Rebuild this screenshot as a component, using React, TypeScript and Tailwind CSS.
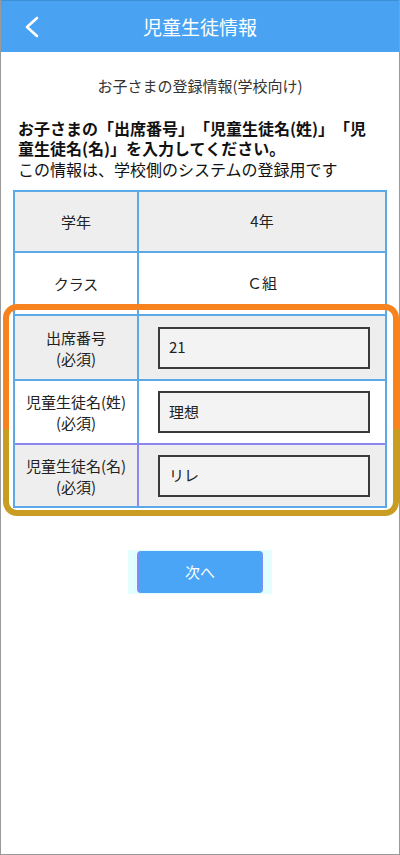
import React from 'react';

const font = { fontFamily: '"Noto Sans CJK JP", "Noto Sans", sans-serif' };

type Row = { label: string[]; value?: string; input?: string; shaded: boolean; tint?: boolean; h: string };

const rows: Row[] = [
  { label: ['学年'], value: '4年', shaded: true, h: 'h-[59px]' },
  { label: ['クラス'], value: 'Ｃ組', shaded: false, h: 'h-[63px]' },
  { label: ['出席番号', '(必須)'], input: '21', shaded: true, h: 'h-[65px]' },
  { label: ['児童生徒名(姓)', '(必須)'], input: '理想', shaded: false, h: 'h-[64px]' },
  { label: ['児童生徒名(名)', '(必須)'], input: 'リレ', shaded: true, tint: true, h: 'h-[63px]' },
];

function BackIcon() {
  return (
    <svg width="16" height="22" viewBox="0 0 16 22" fill="none">
      <polyline points="13,2 3,11 13,20" stroke="white" strokeWidth="2.6" strokeLinecap="round" strokeLinejoin="round" />
    </svg>
  );
}

function InfoRow({ row, first }: { row: Row; first: boolean }) {
  const bg = row.shaded ? 'bg-[#eeeeee]' : 'bg-white';
  const line = row.tint ? 'border-[#8c86f0]' : 'border-[#5ca9e8]';
  return (
    <div className={`flex ${row.h} ${first ? '' : 'border-t-2'} ${line} ${bg}`}>
      <div className={`w-[124px] shrink-0 border-r-2 ${line} flex flex-col items-center justify-center text-[15px] leading-[21px] text-[#222]`}>
        {row.label.map((l) => (
          <span key={l}>{l}</span>
        ))}
      </div>
      <div className="flex-1 flex items-center">
        {row.input !== undefined ? (
          <div className="ml-[19px] w-[212px] h-[42px] border-2 border-[#3a3a3a] bg-[#f3f3f3] flex items-center pl-[9px] text-[15px] text-[#222]">
            {row.input}
          </div>
        ) : (
          <div className="w-full text-center text-[15px] text-[#222]">{row.value}</div>
        )}
      </div>
    </div>
  );
}

export default function App() {
  return (
    <div className="w-[400px] h-[855px] bg-white border-x border-b border-[#9a9a9a] relative overflow-hidden [text-spacing-trim:space-all]" style={font}>
      {/* Header */}
      <header className="h-[52px] bg-[#4aa3f2] border-t border-[#3d8fd6] flex items-center relative">
        <div className="absolute left-[23px] top-[15px]">
          <BackIcon />
        </div>
        <h1 className="w-full text-center text-white text-[19px] leading-none">児童生徒情報</h1>
      </header>

      <p className="mt-[24px] text-center text-[15px] leading-[20px] text-[#333]">お子さまの登録情報(学校向け)</p>

      <div className="mt-[22px] px-[17px] text-[16px] leading-[20px] text-[#111]">
        <p className="font-bold">
          お子さまの「出席番号」「児童生徒名(姓)」「児
          <br />
          童生徒名(名)」を入力してください。
        </p>
        <p className="mt-[1px]">この情報は、学校側のシステムの登録用です</p>
      </div>

      {/* Table */}
      <div className="relative mt-[11px] mx-[12px]">
        <div className="border-2 border-[#5ca9e8]">
          {rows.map((r, i) => (
            <InfoRow key={i} row={r} first={i === 0} />
          ))}
        </div>

        {/* highlight frame overlay */}
        <div className="absolute left-[-10px] top-[114px] w-[396px] h-[125px] overflow-hidden pointer-events-none">
          <div className="w-[396px] h-[212px] border-[6px] border-[#f7821e] rounded-[14px]" />
        </div>
        <div className="absolute left-[-10px] top-[239px] w-[396px] h-[87px] overflow-hidden pointer-events-none">
          <div className="w-[396px] h-[212px] mt-[-125px] border-[6px] border-[#c99d22] rounded-[14px]" />
        </div>
      </div>

      {/* Next button */}
      <div className="mt-[42px] flex justify-center">
        <div className="bg-[#e2feff] px-[9px] py-[1px]">
          <button className="w-[126px] h-[42px] rounded-[4px] bg-[#4ba5f7] border-x-2 border-[#7d8ef0] text-white text-[15px]">
            次へ
          </button>
        </div>
      </div>
    </div>
  );
}
